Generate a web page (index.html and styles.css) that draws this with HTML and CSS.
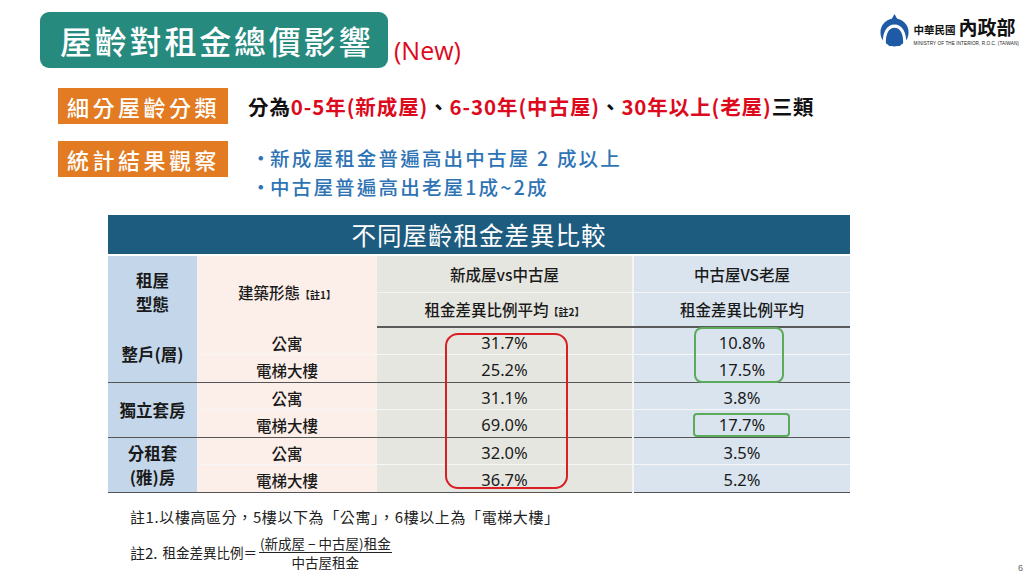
FILE: index.html
```html
<!DOCTYPE html>
<html lang="zh-Hant">
<head>
<meta charset="utf-8">
<title>屋齡對租金總價影響</title>
<link rel="stylesheet" href="styles.css">
</head>
<body>
<div class="slide">
  <header class="top">
    <div class="title-group">
      <h1 class="title">屋齡對租金總價影響</h1>
      <span class="new">(New)</span>
    </div>
    <div class="logo">
      <svg class="emblem" viewBox="0 0 32 34" width="31" height="33" aria-hidden="true">
        <path d="M16 0 L19 5.5 L13 5.5 Z" fill="#1f5aa6"/>
        <circle cx="16" cy="19" r="14.5" fill="#1f5aa6"/>
        <path d="M5.5 31 C5 20 9 12.5 16 12.5 C23 12.5 27 20 26.5 31" fill="none" stroke="#fff" stroke-width="3.2"/>
        <path d="M10 33 C10 24 12.5 19 16 19 C19.5 19 22 24 22 33 Z" fill="#1f5aa6"/>
      </svg>
      <div class="logo-text">
        <div class="logo-main"><span class="roc">中華民國</span><span class="moi">內政部</span></div>
        <div class="logo-en">MINISTRY OF THE INTERIOR, R.O.C. (TAIWAN)</div>
      </div>
    </div>
  </header>

  <section class="summary">
    <div class="row row-cat">
      <div class="tag">細分屋齡分類</div>
      <p class="cat">分為<span class="red">0-5年(新成屋)</span>、<span class="red">6-30年(中古屋)</span>、<span class="red">30年以上(老屋)</span>三類</p>
    </div>
    <div class="row row-obs">
      <div class="tag">統計結果觀察</div>
      <ul class="obs">
        <li>新成屋租金普遍高出中古屋 2 成以上</li>
        <li>中古屋普遍高出老屋1成~2成</li>
      </ul>
    </div>
  </section>

  <div class="table-wrap">
    <table class="cmp">
      <colgroup>
        <col class="c1"><col class="c2"><col class="c3"><col class="c4">
      </colgroup>
      <thead>
        <tr class="caption-row"><th colspan="4">不同屋齡租金差異比較</th></tr>
        <tr class="h1">
          <th rowspan="2" class="k1 type-head">租屋<br>型態</th>
          <th rowspan="2" class="k2">建築形態<small>【註1】</small></th>
          <th class="k3">新成屋vs中古屋</th>
          <th class="k4">中古屋VS老屋</th>
        </tr>
        <tr class="h2">
          <th class="k3">租金差異比例平均<small>【註2】</small></th>
          <th class="k4">租金差異比例平均</th>
        </tr>
      </thead>
      <tbody>
        <tr>
          <th rowspan="2" class="k1 grp">整戶(層)</th>
          <td class="k2">公寓</td><td class="k3 num">31.7%</td><td class="k4 num">10.8%</td>
        </tr>
        <tr class="end">
          <td class="k2">電梯大樓</td><td class="k3 num">25.2%</td><td class="k4 num">17.5%</td>
        </tr>
        <tr>
          <th rowspan="2" class="k1 grp">獨立套房</th>
          <td class="k2">公寓</td><td class="k3 num">31.1%</td><td class="k4 num">3.8%</td>
        </tr>
        <tr class="end">
          <td class="k2">電梯大樓</td><td class="k3 num">69.0%</td><td class="k4 num">17.7%</td>
        </tr>
        <tr>
          <th rowspan="2" class="k1 grp">分租套<br>(雅)房</th>
          <td class="k2">公寓</td><td class="k3 num">32.0%</td><td class="k4 num">3.5%</td>
        </tr>
        <tr class="end">
          <td class="k2">電梯大樓</td><td class="k3 num">36.7%</td><td class="k4 num">5.2%</td>
        </tr>
      </tbody>
    </table>
    <div class="hl hl-red"></div>
    <div class="hl hl-green1"></div>
    <div class="hl hl-green2"></div>
  </div>

  <div class="notes">
    <p class="note1">註1.以樓高區分，5樓以下為「公寓」，6樓以上為「電梯大樓」</p>
    <p class="note2"><span class="n2">註2.</span><span class="lbl">租金差異比例＝</span><span class="frac"><span class="numr">(新成屋 − 中古屋)租金</span><span class="den">中古屋租金</span></span></p>
  </div>
  <span class="page-no">6</span>
</div>
</body>
</html>
```

FILE: styles.css
```css
* { box-sizing: border-box; }
html, body { margin: 0; padding: 0; }
body {
  width: 1024px;
  height: 576px;
  overflow: hidden;
  background: #fff;
  font-family: "Noto Sans", "Noto Sans CJK TC", sans-serif;
  color: #1a1a1a;
}
.slide {
  position: relative;
  width: 1024px;
  height: 576px;
  padding-top: 12px;
}

/* header */
.top {
  display: flex;
  justify-content: space-between;
  align-items: flex-start;
  padding-left: 40px;
  padding-right: 5px;
}
.title-group {
  display: flex;
  align-items: flex-end;
}
.title {
  margin: 0;
  width: 348px;
  height: 56px;
  background: #268a7f;
  border-radius: 9px;
  color: #fff;
  font-family: "Noto Sans CJK TC", sans-serif;
  font-weight: 500;
  font-size: 32px;
  letter-spacing: 2.8px;
  line-height: 56px;
  padding-left: 20px;
}
.new {
  color: #dc0a1c;
  font-family: "Open Sans", "Noto Sans", sans-serif;
  font-size: 25px;
  margin-left: 6px;
  margin-bottom: 2px;
  line-height: 32px;
}
.logo {
  display: flex;
  align-items: center;
  margin-top: 1px;
}
.emblem { display: block; margin-right: 4px; }
.logo-text { display: flex; flex-direction: column; }
.logo-main { display: flex; align-items: center; height: 28px; }
.roc {
  font-family: "Noto Sans CJK TC", sans-serif;
  font-weight: 700;
  font-size: 10.5px;
  color: #111;
  line-height: 15px;
  margin-top: 4px;
}
.moi {
  font-family: "Noto Sans CJK TC", sans-serif;
  font-weight: 700;
  font-size: 19px;
  line-height: 28px;
  color: #111;
  letter-spacing: 0;
  margin-left: 3px;
}
.logo-en {
  font-family: "Liberation Sans", sans-serif;
  font-size: 4.6px;
  line-height: 6px;
  color: #222;
  letter-spacing: 0.1px;
  white-space: nowrap;
}

/* summary */
.summary {
  padding-left: 58px;
  margin-top: 20px;
}
.row { display: flex; }
.row-cat { align-items: center; }
.row-obs { margin-top: 17px; align-items: flex-start; }
.tag {
  width: 170px;
  height: 36px;
  background: #e27b22;
  color: #fff;
  font-family: "Noto Sans CJK TC", sans-serif;
  font-weight: 500;
  font-size: 22px;
  letter-spacing: 3.5px;
  line-height: 36px;
  padding-left: 9px;
  white-space: nowrap;
}
.cat {
  margin: 0 0 0 20px;
  font-family: "Noto Sans CJK TC", sans-serif;
  font-weight: 700;
  font-size: 20.5px;
  color: #111;
  white-space: nowrap;
  letter-spacing: 0.9px;
}
.red { color: #dc0a1c; }
.obs {
  list-style: none;
  margin: 2px 0 0 22px;
  padding: 0;
  font-family: "Noto Sans CJK TC", sans-serif;
  font-weight: 500;
  font-size: 19.5px;
  line-height: 29px;
  color: #2e74b5;
  letter-spacing: 2.2px;
}
.obs li { position: relative; padding-left: 20px; white-space: nowrap; }
.obs li::before {
  content: "•";
  position: absolute;
  left: 1px;
  top: 0;
  color: #2e74b5;
}

/* table */
.table-wrap {
  position: relative;
  margin: 14px 0 0 108px;
  width: 742px;
}
.cmp {
  width: 742px;
  border-collapse: collapse;
  table-layout: fixed;
  font-family: "Noto Sans CJK TC", sans-serif;
  color: #1a1a1a;
}
.c1 { width: 89px; }
.c2 { width: 180px; }
.c3 { width: 256px; }
.c4 { width: 217px; }
.cmp th, .cmp td {
  padding: 0;
  text-align: center;
  vertical-align: middle;
}
.cmp th { font-weight: 500; font-size: 15.5px; }
.cmp .caption-row th {
  height: 40px;
  background: #1d5b7f;
  color: #fff;
  font-weight: 400;
  font-size: 24.5px;
  letter-spacing: 1px;
  border-bottom: 2px solid #fff;
}
.cmp .h1 th { height: 37px; }
.cmp .h2 th { height: 35px; border-bottom: 2px solid #5a5a5a; }
.cmp .h1 .k3, .cmp .h1 .k4 { border-bottom: 1px solid #f4f4f4; }
.cmp small { font-size: 10px; font-weight: 700; }
.cmp .type-head { font-weight: 700; font-size: 16.5px; line-height: 24px; }
.k1 { background: #c3d6ea; }
.k2 { background: #fcefe9; }
.k3 { background: #e6e6e0; }
.k4 { background: #d9e4ef; border-left: 2px solid #f2f4f6; }
.cmp .grp { font-weight: 700; font-size: 16.5px; line-height: 24px; }
.cmp tbody td {
  height: 27.5px;
  font-size: 15.5px;
  font-weight: 500;
  line-height: 20px;
  padding-top: 4px;
}
.cmp tbody tr:not(.end) td { border-bottom: 1px solid #f6f6f6; }
.cmp tbody tr.end td, .cmp tbody tr.end th, .cmp tbody .grp { border-bottom: 1.5px solid #555; }
.cmp td.num {
  font-family: "Noto Sans", sans-serif;
  font-size: 16.5px;
  font-weight: 400;
}
.hl {
  position: absolute;
  border-style: solid;
  pointer-events: none;
}
.hl-red {
  left: 337px; top: 118px; width: 123px; height: 156px;
  border-width: 2px; border-color: #d81f26; border-radius: 13px;
}
.hl-green1 {
  left: 586px; top: 112px; width: 90px; height: 56px;
  border-width: 2px; border-color: #5cab5a; border-radius: 8px;
}
.hl-green2 {
  left: 585px; top: 198px; width: 97px; height: 24px;
  border-width: 2px; border-color: #5cab5a; border-radius: 4px;
}

/* notes */
.notes {
  margin: 14px 0 0 130px;
  font-family: "Noto Sans CJK TC", sans-serif;
  color: #222;
}
.note1 {
  margin: 0;
  font-size: 15px;
  letter-spacing: 0.6px;
  line-height: 20px;
  white-space: nowrap;
}
.note2 {
  margin: 7px 0 0;
  display: flex;
  align-items: center;
  font-size: 13px;
}
.n2 { font-size: 15px; margin-right: 5px; }
.lbl { font-size: 13.5px; }
.frac {
  display: inline-flex;
  flex-direction: column;
  align-items: center;
  font-size: 13.5px;
  line-height: 18px;
  margin-left: 2px;
}
.numr { border-bottom: 1px solid #222; padding: 0 1px; }
.page-no {
  position: absolute;
  right: 1px;
  bottom: 3px;
  font-family: "Liberation Sans", sans-serif;
  font-size: 9px;
  color: #666;
}
```
